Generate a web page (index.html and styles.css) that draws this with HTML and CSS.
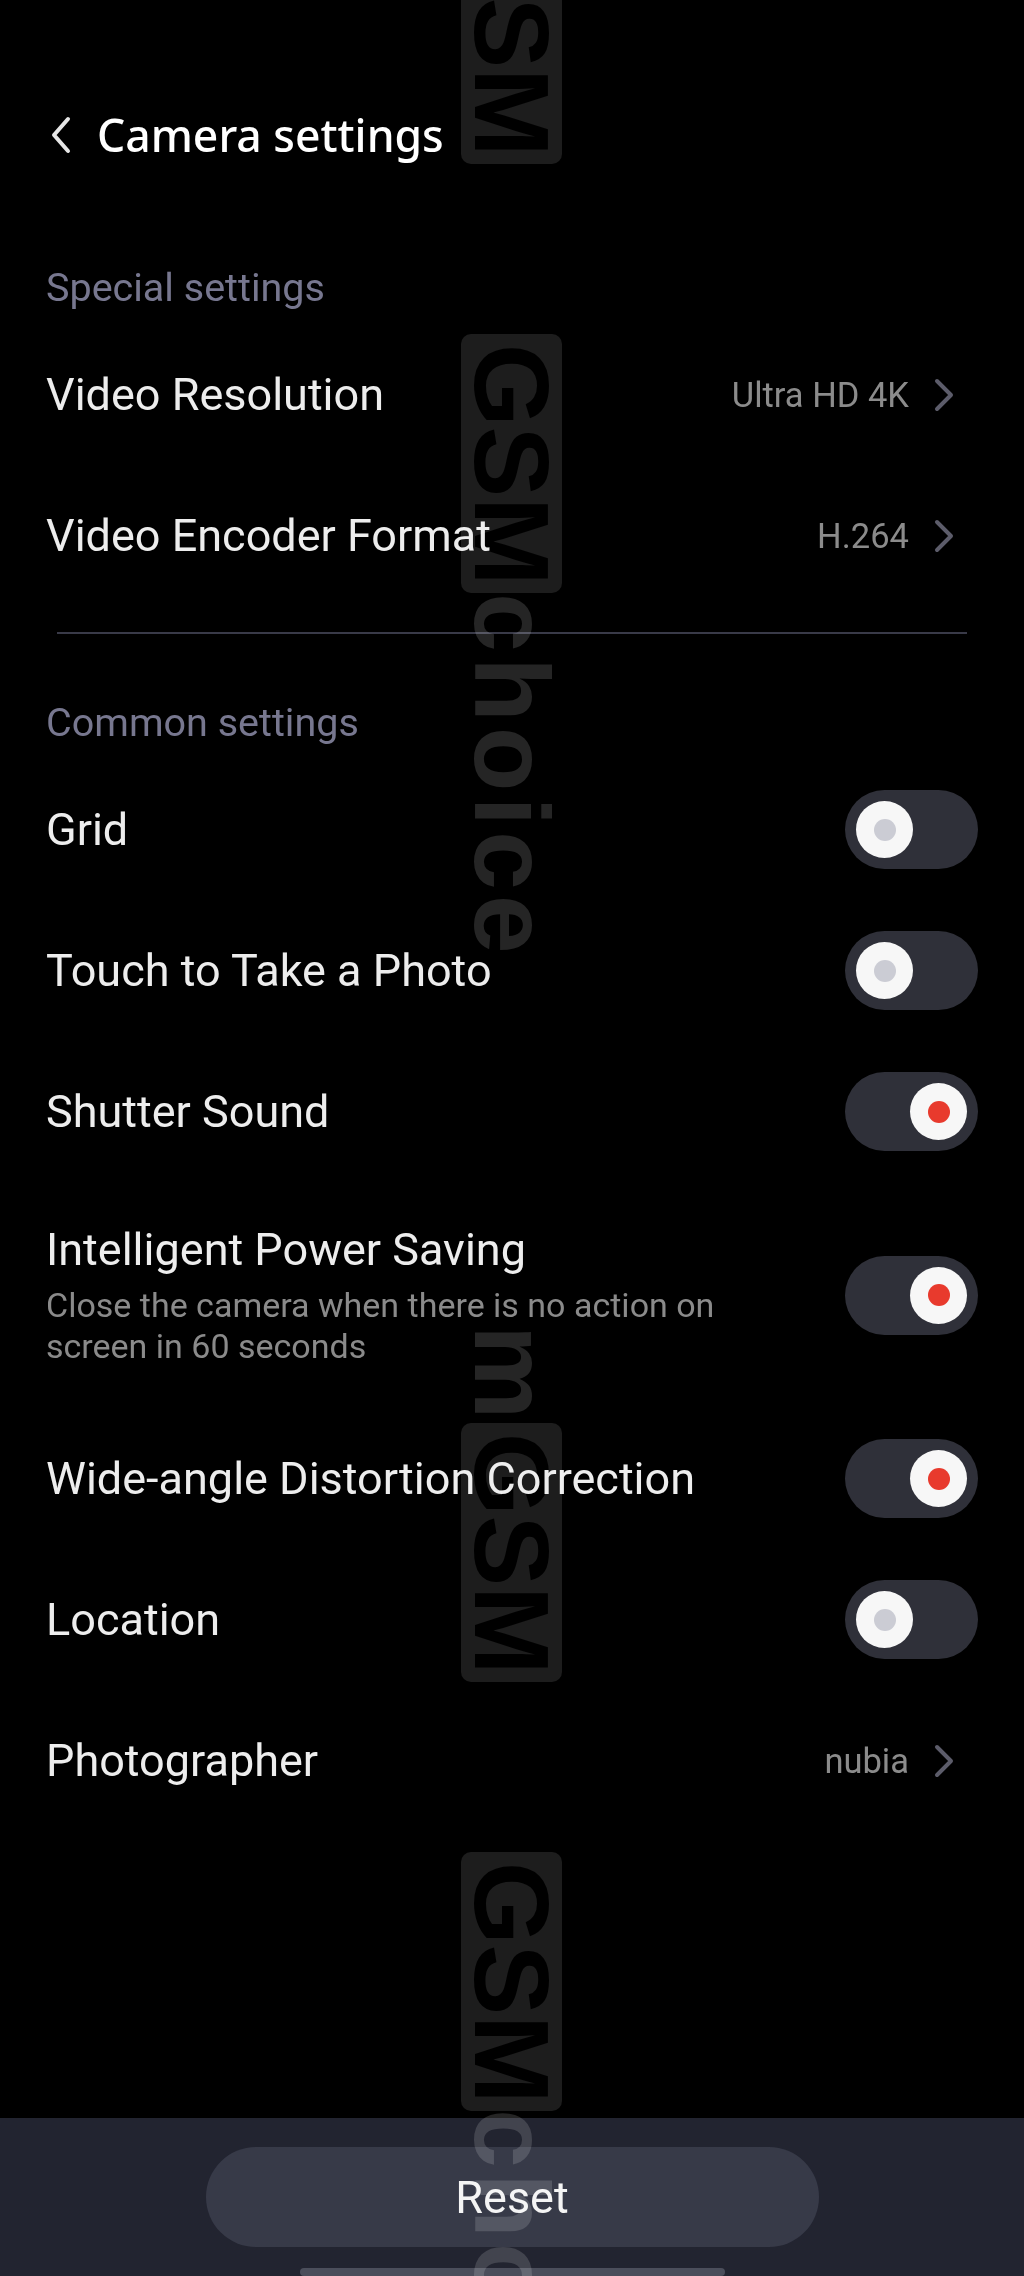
FILE: index.html
```html
<!DOCTYPE html>
<html lang="en">
<head>
    <meta charset="UTF-8">
    <meta name="viewport" content="width=device-width, initial-scale=1.0">
    <title>Camera settings</title>
    <link rel="stylesheet" href="styles.css">
</head>
<body>
    <div class="screen">
        <header class="topbar">
            <svg class="back-icon" viewBox="0 0 24 40" width="24" height="40">
                <path d="M19 4 L5 20 L19 36" />
            </svg>
            <h1>Camera settings</h1>
        </header>

        <main class="settings">
            <h2 class="group-title">Special settings</h2>
            <div class="row">
                <span class="label">Video Resolution</span>
                <span class="value">Ultra HD 4K</span>
                <svg class="chevron" viewBox="0 0 22 36" width="22" height="36"><path d="M4 4 L18 18 L4 32" /></svg>
            </div>
            <div class="row">
                <span class="label">Video Encoder Format</span>
                <span class="value">H.264</span>
                <svg class="chevron" viewBox="0 0 22 36" width="22" height="36"><path d="M4 4 L18 18 L4 32" /></svg>
            </div>

            <hr class="divider">

            <h2 class="group-title common">Common settings</h2>
            <div class="row">
                <span class="label">Grid</span>
                <span class="switch"><span class="knob"></span></span>
            </div>
            <div class="row">
                <span class="label">Touch to Take a Photo</span>
                <span class="switch"><span class="knob"></span></span>
            </div>
            <div class="row">
                <span class="label">Shutter Sound</span>
                <span class="switch on"><span class="knob"></span></span>
            </div>
            <div class="row tall">
                <div class="label-block">
                    <span class="label">Intelligent Power Saving</span>
                    <p class="hint">Close the camera when there is no action on screen in 60 seconds</p>
                </div>
                <span class="switch on"><span class="knob"></span></span>
            </div>
            <div class="row">
                <span class="label">Wide-angle Distortion Correction</span>
                <span class="switch on"><span class="knob"></span></span>
            </div>
            <div class="row">
                <span class="label">Location</span>
                <span class="switch"><span class="knob"></span></span>
            </div>
            <div class="row">
                <span class="label">Photographer</span>
                <span class="value">nubia</span>
                <svg class="chevron" viewBox="0 0 22 36" width="22" height="36"><path d="M4 4 L18 18 L4 32" /></svg>
            </div>
        </main>

        <footer class="bottom-bar">
            <button class="reset-btn">Reset</button>
            <div class="home-bar"></div>
        </footer>

        <!-- watermark from the source screenshot -->
        <div class="watermark">
            <span class="wm-box wm-1">GSM</span>
            <span class="wm-box wm-2">GSM</span>
            <span class="wm-text wm-3">choice</span>
            <span class="wm-text wm-4">m</span>
            <span class="wm-box wm-5">GSM</span>
            <span class="wm-box wm-6">GSM</span>
            <span class="wm-text wm-7">choice</span>
        </div>
    </div>
</body>
</html>
```

FILE: styles.css
```css
html, body {
    margin: 0;
    padding: 0;
    background: #000;
}
body {
    font-family: Roboto, "Noto Sans", Arial, sans-serif;
    color: #f0f0f0;
}
.screen {
    position: relative;
    width: 1024px;
    height: 2276px;
    display: flex;
    flex-direction: column;
    overflow: hidden;
}

/* header */
.topbar {
    height: 270px;
    display: flex;
    align-items: center;
    padding-left: 49px;
    box-sizing: border-box;
}
.back-icon {
    fill: none;
    stroke: #e6e6e6;
    stroke-width: 4;
    stroke-linecap: round;
    stroke-linejoin: round;
    margin-right: 24px;
}
.topbar h1 {
    margin: 0;
    font-family: "Noto Sans", "Open Sans", sans-serif;
    font-weight: 500;
    font-size: 44.5px;
    color: #fff;
    line-height: 60px;
}

/* list */
.settings {
    flex: 1;
}
.group-title {
    margin: 0 0 18px;
    padding-left: 46px;
    font-size: 39.5px;
    font-weight: 400;
    line-height: 36px;
    color: #77778f;
}
.group-title.common {
    margin-top: 71px;
}
.row {
    height: 141px;
    display: flex;
    align-items: center;
    padding: 0 46px;
}
.row.tall {
    height: 226px;
}
.label {
    flex: 1;
    font-size: 45px;
    line-height: 54px;
    color: #ededed;
}
.label-block {
    flex: 1;
}
.label-block .label {
    display: block;
}
.hint {
    max-width: 700px;
    margin: 8px 0 0;
    font-size: 34px;
    line-height: 41px;
    color: #8a8a8a;
}
.value {
    font-size: 34.5px;
    color: #8b8b8b;
    margin-right: 24px;
}
.chevron {
    fill: none;
    stroke: #5c5c6a;
    stroke-width: 4;
    stroke-linecap: round;
    stroke-linejoin: round;
    margin-right: 23px;
}
.divider {
    margin: 26px 57px 0;
    border: none;
    height: 2px;
    background: #393a48;
}

/* switches */
.switch {
    width: 133px;
    height: 79px;
    border-radius: 40px;
    background: #2f3039;
    padding: 11px;
    box-sizing: border-box;
    display: flex;
    flex-shrink: 0;
}
.switch.on {
    justify-content: flex-end;
}
.knob {
    width: 57px;
    height: 57px;
    border-radius: 50%;
    background: #f7f7f7;
    display: flex;
    align-items: center;
    justify-content: center;
}
.knob::after {
    content: "";
    width: 22px;
    height: 22px;
    border-radius: 50%;
    background: #cbccd4;
}
.switch.on .knob::after {
    background: #e83a2d;
}

/* bottom */
.bottom-bar {
    height: 158px;
    background: #222430;
    display: flex;
    flex-direction: column;
    align-items: center;
    padding-top: 29px;
    box-sizing: border-box;
}
.reset-btn {
    width: 613px;
    height: 101px;
    border: none;
    border-radius: 51px;
    background: #373a48;
    color: #f4f4f4;
    font-family: Roboto, sans-serif;
    font-size: 45px;
    padding: 0;
}
.home-bar {
    margin-top: 21px;
    width: 425px;
    height: 8px;
    border-radius: 4px;
    background: #4b4e5b;
}

/* watermark overlay */
.watermark {
    position: absolute;
    top: 0;
    left: 461px;
    width: 101px;
    height: 2276px;
    pointer-events: none;
    mix-blend-mode: screen;
}
.wm-box,
.wm-text {
    position: absolute;
    left: 0;
    width: 101px;
    writing-mode: vertical-rl;
    font-family: "Liberation Sans", Arial, sans-serif;
    font-weight: 700;
    font-size: 106px;
    line-height: 101px;
    text-align: center;
}
.wm-box {
    box-sizing: border-box;
    height: 259px;
    padding: 10px 0;
    background: #1d1d1d;
    color: #000;
    border-radius: 10px;
}
.wm-text {
    color: #252525;
    letter-spacing: 5px;
}
.wm-1 { top: -95px; }
.wm-2 { top: 334px; }
.wm-3 { top: 593px; }
.wm-4 { top: 1325px; }
.wm-5 { top: 1423px; }
.wm-6 { top: 1852px; }
.wm-7 { top: 2109px; }
```
